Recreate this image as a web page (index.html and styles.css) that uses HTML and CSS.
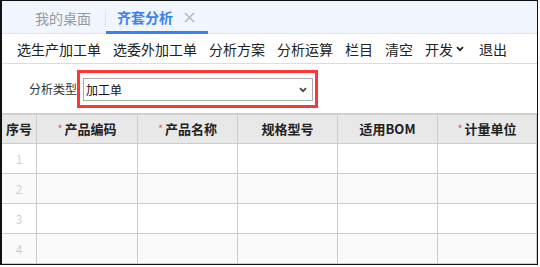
FILE: index.html
```html
<!DOCTYPE html>
<html lang="zh">
<head>
    <meta charset="UTF-8">
    <meta name="viewport" content="width=device-width, initial-scale=1.0">
    <title>齐套分析</title>
    <link rel="stylesheet" href="styles.css">
</head>
<body>
    <div class="frame">
        <div class="tabs">
            <div class="tab">我的桌面</div>
            <span class="tab-sep"></span>
            <div class="tab active">齐套分析
                <svg class="tab-close" width="11" height="11" viewBox="0 0 11 11"><path d="M1 1 L10 10 M10 1 L1 10" stroke="#bbb" stroke-width="1.6"/></svg>
            </div>
        </div>

        <div class="toolbar">
            <span class="tool">选生产加工单</span>
            <span class="tool">选委外加工单</span>
            <span class="tool">分析方案</span>
            <span class="tool">分析运算</span>
            <span class="tool">栏目</span>
            <span class="tool">清空</span>
            <span class="tool dev">开发
                <svg width="8" height="6" viewBox="0 0 8 6"><path d="M1 1.2 L4 4.2 L7 1.2" fill="none" stroke="#222" stroke-width="1.8"/></svg>
            </span>
            <span class="tool">退出</span>
        </div>

        <div class="filter">
            <label class="filter-label">分析类型</label>
            <div class="highlight">
                <div class="select">
                    <span>加工单</span>
                    <svg width="8" height="6" viewBox="0 0 8 6"><path d="M1 1.2 L4 4.2 L7 1.2" fill="none" stroke="#444" stroke-width="1.7"/></svg>
                </div>
            </div>
        </div>

        <div class="grid">
            <div class="th">序号</div>
            <div class="th"><i class="req">*</i>产品编码</div>
            <div class="th"><i class="req">*</i>产品名称</div>
            <div class="th">规格型号</div>
            <div class="th">适用BOM</div>
            <div class="th"><i class="req">*</i>计量单位</div>

            <div class="td num">1</div><div class="td"></div><div class="td"></div><div class="td"></div><div class="td"></div><div class="td"></div>
            <div class="td num alt">2</div><div class="td alt"></div><div class="td alt"></div><div class="td alt"></div><div class="td alt"></div><div class="td alt"></div>
            <div class="td num">3</div><div class="td"></div><div class="td"></div><div class="td"></div><div class="td"></div><div class="td"></div>
            <div class="td num alt">4</div><div class="td alt"></div><div class="td alt"></div><div class="td alt"></div><div class="td alt"></div><div class="td alt"></div>
        </div>
    </div>
</body>
</html>
```

FILE: styles.css
```css
body {
    margin: 0;
    background: #fff;
    font-family: "Noto Sans CJK SC", "Noto Sans", sans-serif;
    color: #222;
}

.frame {
    width: 538px;
    height: 265px;
    box-sizing: border-box;
    border: 1px solid #111;
    border-left-width: 2px;
    overflow: hidden;
    background: #fff;
}

/* tab bar */
.tabs {
    height: 33px;
    box-sizing: border-box;
    background: #f0f5fe;
    border-bottom: 1px solid #e2e6ec;
    display: flex;
    align-items: stretch;
    padding-left: 33px;
}
.tab {
    display: flex;
    align-items: center;
    font-size: 14px;
    line-height: 16px;
    color: #999;
    padding: 2px 14px 0 0;
}
.tab-sep {
    width: 1px;
    height: 16px;
    background: #dde2ea;
    align-self: center;
    margin-top: 3px;
}
.tab.active {
    color: #3b7ff5;
    font-weight: bold;
    padding: 2px 13px 0 11px;
    border-bottom: 3px solid #3b7ff5;
    margin-bottom: -1px;
}
.tab-close {
    margin-left: 11px;
}

/* toolbar */
.toolbar {
    height: 30px;
    box-sizing: border-box;
    border-bottom: 1px solid #ddd;
    display: flex;
    align-items: center;
    gap: 12px;
    padding-left: 15px;
    font-size: 14px;
    line-height: 16px;
    color: #222;
}
.tool {
    display: flex;
    align-items: center;
}
.dev {
    margin-right: 3px;
}
.dev svg {
    margin-left: 3px;
}

/* filter row */
.filter {
    height: 49px;
    box-sizing: border-box;
    display: flex;
    align-items: center;
    padding: 1px 0 0 27px;
}
.filter-label {
    font-size: 12px;
    line-height: 14px;
    color: #333;
}
.highlight {
    border: 3px solid #ff3636;
    padding: 5px 2px 4px 3px;
}
.select {
    width: 230px;
    height: 23px;
    box-sizing: border-box;
    border: 1px solid #aaa;
    display: flex;
    align-items: center;
    justify-content: space-between;
    padding: 0 5px 0 2px;
    font-size: 12px;
    line-height: 14px;
    color: #111;
}

/* table */
.grid {
    display: grid;
    grid-template-columns: 35px 101px 100px 100px 100px 1fr;
    grid-template-rows: 31px repeat(4, 30px);
}
.th, .td {
    box-sizing: border-box;
    border-right: 1px solid #ccc;
    border-bottom: 1px solid #ccc;
    display: flex;
    align-items: center;
    justify-content: center;
}
.th {
    background: #e8e8e8;
    border-top: 2px solid #d0d0d0;
    font-size: 13px;
    line-height: 15px;
    font-weight: bold;
    color: #222;
    padding-bottom: 1px;
}
.req {
    font-style: normal;
    font-weight: normal;
    color: #f05a5a;
    font-size: 11px;
    margin-right: 2px;
    align-self: flex-start;
    margin-top: 6px;
}
.td {
    background: #fff;
}
.td.alt {
    background: #fafafa;
}
.num {
    font-size: 12px;
    color: #d0d0d0;
}
```
